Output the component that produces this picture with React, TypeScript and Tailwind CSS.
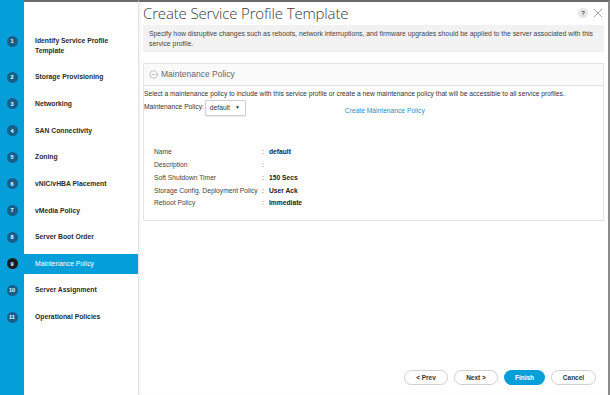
import { CircleMinus } from 'lucide-react';

const steps = [
  'Storage Provisioning',
  'Networking',
  'SAN Connectivity',
  'Zoning',
  'vNIC/vHBA Placement',
  'vMedia Policy',
  'Server Boot Order',
  'Maintenance Policy',
  'Server Assignment',
  'Operational Policies',
];

const details = [
  ['Name', 'default'],
  ['Description', ''],
  ['Soft Shutdown Timer', '150 Secs'],
  ['Storage Config. Deployment Policy', 'User Ack'],
  ['Reboot Policy', 'Immediate'],
];

function StepNum({ n, active }: { n: number; active?: boolean }) {
  return (
    <div className="w-[24px] shrink-0 flex justify-center">
      <div
        className={`w-[11px] h-[11px] rounded-full flex items-center justify-center text-white text-[5.5px] font-bold ${active ? 'bg-[#1c1c1c]' : 'bg-[#195e88]'}`}
      >
        {n}
      </div>
    </div>
  );
}

export default function App() {
  return (
    <div className="w-[610px] h-[395px] flex bg-white overflow-hidden font-['Liberation_Sans',Arial,sans-serif] text-[#333]">
      {/* wizard steps */}
      <div className="w-[138px] shrink-0 flex flex-col bg-[#049fd9]">
        <div className="h-[27px] ml-[24px] bg-white border-t-2 border-[#6a6a6a]" />
        <div className="h-[37px] flex">
          <div className="w-[24px] shrink-0 flex justify-center pt-[8.5px]">
            <div className="w-[11px] h-[11px] rounded-full flex items-center justify-center text-white text-[5.5px] font-bold bg-[#195e88]">
              1
            </div>
          </div>
          <div className="flex-1 bg-white pl-[11px] pt-[9px] text-[6.8px] font-bold leading-[10px] text-[#2b2b2b]">
            Identify Service Profile
            <br />
            Template
          </div>
        </div>
        {steps.map((s, i) => {
          const active = s === 'Maintenance Policy';
          return (
            <div key={s} className="h-[26.67px] flex items-center">
              <StepNum n={i + 2} active={active} />
              <div className="flex-1 h-full bg-white flex items-center">
                <div
                  className={`w-full h-[20px] flex items-center pl-[11px] text-[6.8px] ${active ? 'bg-[#049fd9] text-white' : 'font-bold text-[#2b2b2b]'}`}
                >
                  {s}
                </div>
              </div>
            </div>
          );
        })}
        <div className="flex-1 ml-[24px] bg-white" />
      </div>

      {/* main content */}
      <div className="flex-1 flex flex-col border-t-2 border-r-2 border-l border-l-[#e2e2e2] border-t-[#6a6a6a] border-r-[#8a8a8a] pl-[4px] pr-[4px] shadow-[inset_2px_0_2px_rgba(0,0,0,0.04)]">
        <div className="h-[22px] flex items-center justify-between">
          <h1 className="text-[15px] font-light text-[#3a3a3a] tracking-[-0.15px] font-['Open_Sans',sans-serif]">
            Create Service Profile Template
          </h1>
          <div className="flex items-center gap-[5px] pr-[1px]">
            <div className="w-[10px] h-[10px] rounded-full bg-[#e6e6e6] flex items-center justify-center text-[6px] font-bold text-[#444]">
              ?
            </div>
            <svg width="10" height="10" viewBox="0 0 10 10" className="text-[#9a9a9a]">
              <path d="M1 1 L9 9 M9 1 L1 9" stroke="currentColor" strokeWidth="0.9" />
            </svg>
          </div>
        </div>

        <div className="mt-[1px] h-[27px] bg-[#f2f2f2] pl-[6px] pr-0 py-[4px] text-[6.85px] leading-[10px] text-[#444]">
          Specify how disruptive changes such as reboots, network interruptions, and firmware upgrades should be applied to the server associated with this service profile.
        </div>

        <div className="mt-[11px] h-[158px] border border-[#e4e4e4] flex flex-col">
          <div className="h-[22px] bg-[#fafafa] border-b border-[#e4e4e4] flex items-center pl-[5px] gap-[3px] text-[8.5px] text-[#666]">
            <CircleMinus size={9} strokeWidth={1.3} className="text-[#8a8a8a]" />
            Maintenance Policy
          </div>
          <div className="text-[6.7px] pt-[2px] leading-[11px] text-[#333]">
            Select a maintenance policy to include with this service profile or create a new maintenance policy that will be accessible to all service profiles.
          </div>
          <div className="flex items-start h-[17px] mt-[1px]">
            <span className="text-[6.7px] pt-[1px] leading-[11px]">Maintenance Policy:</span>
            <div className="ml-[1px] w-[41px] h-[16px] border border-[#cfcfcf] rounded-[1px] bg-white flex items-center pl-[4px] gap-[5px] text-[6.7px] shadow-[0_1px_1px_rgba(0,0,0,0.08)]">
              default <span className="text-[5px]">▼</span>
            </div>
            <span className="ml-[99px] mt-[6px] text-[6.7px] leading-[10px] text-[#2a8cc0]">
              Create Maintenance Policy
            </span>
          </div>
          <div className="mt-[29px] pl-[10px] flex flex-col">
            {details.map(([k, v]) => (
              <div key={k} className="h-[12.75px] flex items-center text-[6.7px]">
                <span className="w-[108px] text-[#444]">{k}</span>
                <span className="w-[7px]">:</span>
                <span className="font-bold text-[#222]">{v}</span>
              </div>
            ))}
          </div>
        </div>

        <div className="flex-1 flex items-end justify-end pb-[10px] pr-[8px] gap-[6px]">
          {['< Prev', 'Next >', 'Finish', 'Cancel'].map((b) => (
            <div
              key={b}
              className={`h-[15px] rounded-full flex items-center justify-center text-[6.5px] font-bold ${b === 'Finish' ? 'w-[41px] bg-[#049fd9] text-white' : 'border border-[#d0d0d0] text-[#333] bg-white'} ${b === 'Cancel' ? 'w-[45px]' : b === 'Finish' ? '' : 'w-[44px]'}`}
            >
              {b}
            </div>
          ))}
        </div>
      </div>
    </div>
  );
}
